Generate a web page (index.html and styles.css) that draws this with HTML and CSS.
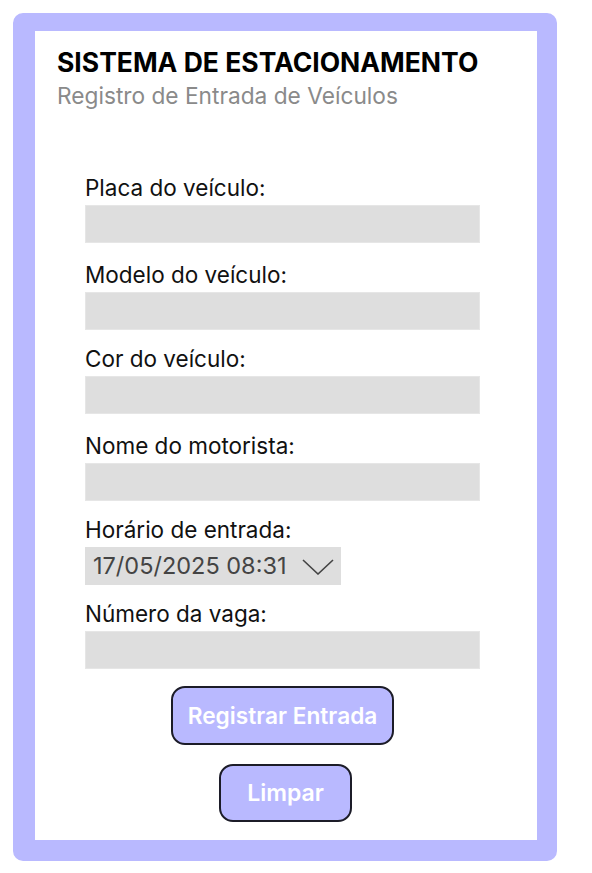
FILE: index.html
```html
<!DOCTYPE html>
<html lang="pt">
<head>
<meta charset="utf-8">
<title>Sistema de Estacionamento</title>
<link rel="stylesheet" href="styles.css">
</head>
<body>
<div class="frame">
  <header class="head">
    <h1 class="title">SISTEMA DE ESTACIONAMENTO</h1>
    <p class="subtitle">Registro de Entrada de Veículos</p>
  </header>
  <form class="form">
    <div class="field">
      <label class="label">Placa do veículo:</label>
      <div class="input"></div>
    </div>
    <div class="field field-wide">
      <label class="label">Modelo do veículo:</label>
      <div class="input"></div>
    </div>
    <div class="field">
      <label class="label">Cor do veículo:</label>
      <div class="input"></div>
    </div>
    <div class="field field-wide">
      <label class="label">Nome do motorista:</label>
      <div class="input"></div>
    </div>
    <div class="field">
      <label class="label">Horário de entrada:</label>
      <div class="datetime">
        <span class="dt-text">17/05/2025 08:31</span>
        <svg class="chev" width="32" height="16" viewBox="0 0 32 16"><path d="M1 1 L16 15 L31 1" fill="none" stroke="#444" stroke-width="1.6"/></svg>
      </div>
    </div>
    <div class="field">
      <label class="label">Número da vaga:</label>
      <div class="input"></div>
    </div>
    <div class="actions">
      <button type="button" class="btn btn-main">Registrar Entrada</button>
      <button type="button" class="btn btn-clear">Limpar</button>
    </div>
  </form>
</div>
</body>
</html>
```
FILE: styles.css
```css
* { box-sizing: border-box; }
body {
  margin: 0;
  background: #fff;
  font-family: Inter, "Noto Sans", sans-serif;
}
.frame {
  margin: 13px 0 0 13px;
  width: 544px;
  border-style: solid;
  border-color: #b9b9ff;
  border-width: 18px 20px 21px 22px;
  border-radius: 10px;
  background: #fff;
  padding: 16px 0 18px 22px;
}
.title {
  margin: 0;
  font-size: 26.5px;
  line-height: 30px;
  font-weight: 700;
  color: #000;
}
.subtitle {
  margin: 6px 0 0;
  font-size: 22.7px;
  line-height: 26px;
  color: #8a8a8a;
}
.form {
  margin: 67px 0 0 28px;
  width: 395px;
  display: flex;
  flex-direction: column;
  gap: 17px;
}
.field {
  display: flex;
  flex-direction: column;
  gap: 5px;
}
.field-wide { margin-top: 3px; }
.label {
  font-size: 22.5px;
  line-height: 24px;
  color: #111;
}
.input {
  height: 38px;
  background: #dedede;
  border: 1px solid #e6e6e6;
}
.datetime {
  width: 256px;
  height: 38px;
  background: #dedede;
  display: flex;
  align-items: center;
  padding: 0 7px 0 8px;
  justify-content: space-between;
}
.dt-text {
  font-size: 23.5px;
  color: #444;
  line-height: 26px;
}
.chev { display: block; margin-top: 2px; }
.actions {
  margin-top: 0;
  display: flex;
  flex-direction: column;
  align-items: center;
  gap: 19px;
}
.btn {
  font-family: Inter, "Noto Sans", sans-serif;
  font-size: 22.7px;
  font-weight: 600;
  color: #fff;
  background: #b9b9ff;
  border: 2px solid #1c1c28;
  border-radius: 14px;
  padding: 0;
}
.btn-main { width: 223px; height: 59px; }
.btn-clear { width: 133px; height: 58px; margin-left: 6px; font-size: 23px; }
```
